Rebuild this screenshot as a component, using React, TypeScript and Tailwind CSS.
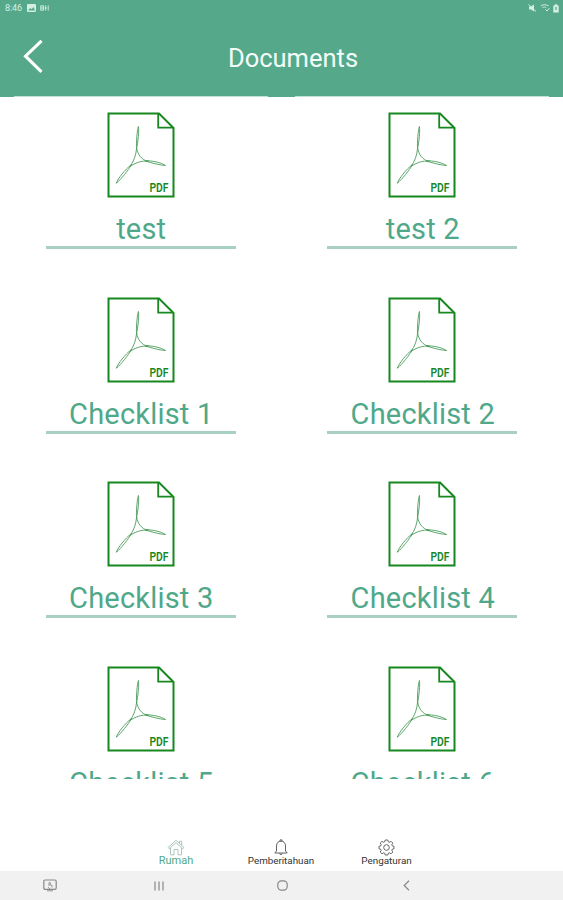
import React from "react";

const documents = [
  "test",
  "test 2",
  "Checklist 1",
  "Checklist 2",
  "Checklist 3",
  "Checklist 4",
  "Checklist 5",
  "Checklist 6",
];

const PdfIcon = () => (
  <svg width="68" height="86" viewBox="0 0 68 86" fill="none" className="shrink-0">
    <path d="M1.5 1.6H52L66.5 16V84.4H1.5Z" stroke="#16881f" strokeWidth="2" />
    <path d="M51.2 2V15.6H66" stroke="#16881f" strokeWidth="1.8" />
    {/* three loops of the acrobat mark */}
    <g stroke="#4b9c5b" strokeWidth="0.9">
      <path d="M31.4 14.5C30 19 29.2 30 29.5 37C31 30 32.2 19 31.4 14.5Z" />
      <path d="M58.5 53.5C54 50.5 45 48.5 38 48.8C44 50.8 53 53.3 58.5 53.5Z" />
      <path d="M9.3 71.2C11 66.5 18 57.5 24.5 52.5C21.5 58 14 67.5 9.3 71.2Z" />
      <path d="M29.6 36C29 43 27 49 23 54.5" />
      <path d="M29.6 36C31 43 34 47 41 49.8" />
      <path d="M23 54.5C28 51 34 48.6 42 49" />
    </g>
    <text
      x="42.5"
      y="80.2"
      textLength="19"
      lengthAdjust="spacingAndGlyphs"
      fill="#16881f"
      fontSize="13.5"
      fontWeight="600"
      fontFamily="Roboto, sans-serif"
    >
      PDF
    </text>
  </svg>
);

const DocumentItem = ({ title }: { title: string }) => (
  <div className="flex h-[184.7px] flex-col items-center">
    <PdfIcon />
    <div className="mt-[14px] h-[37px] w-[190px] border-b-[3px] border-[#a9d1c1] pl-px text-center text-[29px] leading-[35px] tracking-[0.2px] text-[#4fa889]">
      {title}
    </div>
  </div>
);

const StatusBar = () => (
  <div className="flex h-4 items-center justify-between pr-1 pl-[5px] text-[#d5ede3]">
    <div className="flex items-center gap-[4px]">
      <span className="w-[18px] text-[9px] leading-4 tracking-[-0.1px]">8:46</span>
      <svg width="9" height="8" viewBox="0 0 9 8">
        <rect width="9" height="8" rx="1" fill="currentColor" />
        <path d="M1 6.5L3.3 4L4.6 5.3L6.5 3L8 6.5Z" fill="#55a98a" />
      </svg>
      <svg width="9" height="6" viewBox="0 0 9 6" fill="none" stroke="currentColor">
        <path d="M0.8 0.8H3.4V5.2H0.8ZM0.8 3H3.4M5.4 0.5V5.5M5.4 3H7M8.2 0.5V5.5" />
      </svg>
    </div>
    <div className="flex items-center gap-[3px]">
      <svg width="9" height="8" viewBox="0 0 9 8">
        <path d="M1 2.5H3L6 0.5V7.5L3 5.5H1Z" fill="currentColor" />
        <path d="M0.5 0.5L8 7.5" stroke="currentColor" />
      </svg>
      <svg width="10" height="8" viewBox="0 0 10 8" fill="none" stroke="currentColor">
        <path d="M0.8 2C3 0.3 6 0.3 8.5 2M2.4 3.8C3.8 2.8 5 2.8 6.2 3.6M5.5 5.5L7 7L9.3 4.2" />
      </svg>
      <svg width="6" height="9" viewBox="0 0 6 9">
        <path d="M0.3 1.5H1.8V0.3H4.2V1.5H5.7V8.5H0.3Z" fill="currentColor" />
        <path d="M3 3V6" stroke="#55a98a" strokeWidth="1.2" />
      </svg>
    </div>
  </div>
);

const Header = () => (
  <header className="flex h-[97px] flex-col bg-[#55a98a]">
    <StatusBar />
    <div className="grid h-20 grid-cols-[60px_1fr_60px] items-center">
      <svg width="60" height="40" viewBox="0 0 60 40" fill="none">
        <path d="M41.5 4.8L25.5 20.2L41.5 35.8" stroke="#fff" strokeWidth="3.1" />
      </svg>
      <h1 className="pt-1 pl-[23px] text-center text-[25.5px] leading-8 text-[#f3fcf8]">
        Documents
      </h1>
    </div>
    {/* top edge of the two columns */}
    <div className="flex h-px justify-between px-[14px]">
      <div className="w-[254px] bg-[#c3e0d4]" />
      <div className="w-[254px] bg-[#c3e0d4]" />
    </div>
  </header>
);

const HomeIcon = () => (
  <svg width="18" height="17" viewBox="0 0 18 17" fill="none" stroke="#a3bfb4" strokeWidth="0.9">
    <path d="M1 8.5L9 1.3L17 8.5L15.8 9.7L9 3.7L2.2 9.7ZM3.5 9V15.8H7V10.5H11V15.8H14.5V9M12.5 4.3V2.3H14.7V6.3" />
  </svg>
);

const BellIcon = () => (
  <svg width="14" height="17" viewBox="0 0 14 17" fill="none" stroke="#555" strokeWidth="0.9">
    <path d="M0.8 14H13.2L11.5 12V7C11.5 3.8 9.6 2.2 7 2.2S2.5 3.8 2.5 7V12ZM6 2.2V0.9H8V2.2M5.5 14.2C5.7 16 8.3 16 8.5 14.2" />
  </svg>
);

const GearIcon = () => (
  <svg width="17" height="17" viewBox="0 0 17 17" fill="none" stroke="#555" strokeWidth="0.9">
    <path d="M7.2 1H9.8L10.3 2.8L11.4 3.3L13 2.3L14.8 4.1L13.8 5.7L14.2 6.8L16 7.3V9.8L14.2 10.3L13.8 11.4L14.8 13L13 14.8L11.4 13.8L10.3 14.2L9.8 16H7.2L6.7 14.2L5.6 13.8L4 14.8L2.2 13L3.2 11.4L2.8 10.3L1 9.8V7.3L2.8 6.8L3.2 5.7L2.2 4.1L4 2.3L5.6 3.3L6.7 2.8Z" />
    <circle cx="8.5" cy="8.5" r="2.8" />
  </svg>
);

const tabs = [
  { label: "Rumah", icon: <HomeIcon />, className: "text-[11px] text-[#4fa889]" },
  { label: "Pemberitahuan", icon: <BellIcon />, className: "text-[9.8px] text-[#333]" },
  { label: "Pengaturan", icon: <GearIcon />, className: "text-[9.9px] text-[#333]" },
];

const TabBar = () => (
  <nav className="grid h-[92px] grid-cols-[105px_105px_106px] justify-center pt-[60px]">
    {tabs.map((tab) => (
      <div key={tab.label} className="flex flex-col items-center">
        {tab.icon}
        <span className={`${tab.className} -mt-px leading-[11px] whitespace-nowrap`}>
          {tab.label}
        </span>
      </div>
    ))}
  </nav>
);

const SystemNav = () => (
  <div className="grid h-[29px] grid-cols-[99px_120px_126px_122px] items-center justify-items-center bg-[#f1f1f1] text-[#888]">
    <svg width="14" height="13" viewBox="0 0 14 13" fill="none" stroke="currentColor" strokeWidth="1.2">
      <rect x="0.8" y="1" width="12.4" height="9.4" rx="1.3" />
      <path d="M6 7V4C6 3 7.3 3 7.3 4V6L9 6.5V8.5M5 8.2L7 10M4 11.8H10" strokeWidth="0.9" />
    </svg>
    <svg width="10" height="10" viewBox="0 0 10 10" stroke="currentColor" strokeWidth="1.2">
      <path d="M1 0.5V9.5M5 0.5V9.5M9 0.5V9.5" />
    </svg>
    <svg width="11" height="11" viewBox="0 0 11 11" fill="none" stroke="currentColor" strokeWidth="1.2">
      <rect x="0.8" y="0.8" width="9.4" height="9.4" rx="3.6" />
    </svg>
    <svg width="7" height="11" viewBox="0 0 7 11" fill="none" stroke="currentColor" strokeWidth="1.2">
      <path d="M6 0.8L1.2 5.5L6 10.2" />
    </svg>
  </div>
);

export default function App() {
  return (
    <div className="flex h-[900px] w-full flex-col bg-white font-['Roboto',sans-serif]">
      <Header />
      <main className="grid h-[682px] grid-cols-2 content-start overflow-hidden pt-[15px]">
        {documents.map((title) => (
          <DocumentItem key={title} title={title} />
        ))}
      </main>
      <TabBar />
      <SystemNav />
    </div>
  );
}
